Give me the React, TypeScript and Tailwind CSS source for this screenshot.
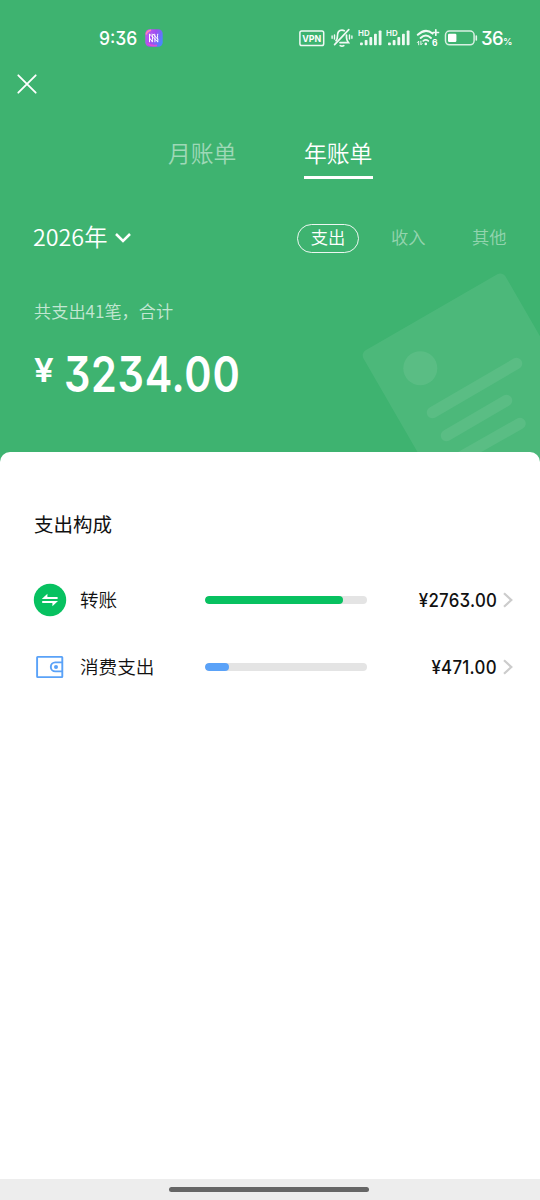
import React from "react";

type FilterItem = { label: string; active: boolean };

type ExpenseItem = {
  id: string;
  label: string;
  amount: string;
  percent: number;
  barClass: string;
  icon: React.ReactNode;
};

const filters: FilterItem[] = [
  { label: "支出", active: true },
  { label: "收入", active: false },
  { label: "其他", active: false },
];

const expenses: ExpenseItem[] = [
  {
    id: "transfer",
    label: "转账",
    amount: "¥2763.00",
    percent: 85.4,
    barClass: "bg-[#07c160]",
    icon: <TransferIcon />,
  },
  {
    id: "spending",
    label: "消费支出",
    amount: "¥471.00",
    percent: 14.6,
    barClass: "bg-[#5aa2f8]",
    icon: <WalletIcon />,
  },
];

function TransferIcon() {
  return (
    <svg width="34" height="34" viewBox="0 0 34 34">
      <circle cx="17" cy="17" r="16.2" fill="#07c160" />
      <path d="M8.8 15.9 14.4 10.8v3.1h10.2v2zM25 18.1 19.4 23.2v-3.1H9.2v-2z" fill="#fff" />
    </svg>
  );
}

function WalletIcon() {
  return (
    <svg width="34" height="34" viewBox="0 0 34 34" fill="none" stroke="#5aa2f8" strokeWidth="1.9">
      <rect x="4.1" y="6.9" width="25.2" height="20.2" rx="0.6" />
      <path d="M29.3 12.4h-7a4.5 4.5 0 0 0 0 9h7" />
      <circle cx="23" cy="16.9" r="2" fill="#5aa2f8" stroke="none" />
    </svg>
  );
}

function SignalIcon() {
  return (
    <svg width="26" height="20" viewBox="0 0 26 20" fill="#fff" opacity="0.92">
      <text x="0" y="7.5" fontSize="8" fontWeight="700" fontFamily="Inter, sans-serif" textLength="11.6" lengthAdjust="spacingAndGlyphs">
        HD
      </text>
      <rect x="2" y="14.4" width="2.8" height="2.8" rx="0.8" />
      <rect x="6.7" y="12" width="2.8" height="5.2" rx="0.8" />
      <rect x="11.4" y="9" width="2.8" height="8.2" rx="0.8" />
      <rect x="16" y="5.8" width="2.8" height="11.4" rx="0.8" />
      <rect x="20.7" y="2.4" width="2.8" height="14.8" rx="0.8" />
    </svg>
  );
}

function StatusBar() {
  return (
    <div className="flex h-[76px] items-center pr-[29px] pl-[99px] text-white">
      <span className="mt-[1px] w-[46px] origin-left scale-x-[0.97] text-[18px] leading-none font-medium">9:36</span>

      {/* App badge */}
      <svg width="18" height="18" viewBox="0 0 18 18">
        <defs>
          <linearGradient id="badge" x1="0" y1="0.2" x2="1" y2="0.6">
            <stop offset="0" stopColor="#c45bf0" />
            <stop offset="0.5" stopColor="#a04df0" />
            <stop offset="1" stopColor="#4a86ff" />
          </linearGradient>
        </defs>
        <rect x="0.3" y="0.3" width="17.4" height="17.4" rx="4.5" fill="url(#badge)" />
        <path d="M2.5 14.5Q5 17.2 12 16.4" stroke="#e04bd8" strokeWidth="1.8" fill="none" />
        <path d="M1.2 5.5Q2 1.8 6 1.2" stroke="#ff86b0" strokeWidth="1.5" fill="none" />
        <path
          d="M4.5 4.8v8.4M7 4.7c1.2 3 .2 5 .3 8.5M9.6 4.8c.8 2.5.2 5 .3 8.4M12.8 4.8c-.8 2.5.2 5 0 8.4M4.5 5l4 4 4.5 4M4.5 9 7.5 13M8 5l5 5.5"
          stroke="#fff"
          strokeWidth="1"
          fill="none"
        />
      </svg>

      <div className="ml-auto flex items-center">
        <svg width="26" height="17" viewBox="0 0 26 17" fill="none">
          <rect x="0.9" y="0.9" width="23.8" height="14.6" rx="1.8" stroke="#fff" strokeOpacity="0.92" strokeWidth="1.5" />
          <text x="3.3" y="11.7" fontSize="9.5" fontWeight="700" fill="#fff" fontFamily="Inter, sans-serif" textLength="19" lengthAdjust="spacingAndGlyphs">
            VPN
          </text>
        </svg>

        {/* Muted bell */}
        <svg className="ml-[6px]" width="22" height="20" viewBox="0 0 22 20" fill="none" stroke="#fff" strokeOpacity="0.92" strokeWidth="1.7" strokeLinecap="round">
          <path d="M3.6 16.6 17.8 1.6" />
          <path d="M5 12.6q1.4-1.5 1.4-4.2C6.4 4.8 8 2.2 11 2.2q1.3 0 2.3.5M15.5 7v2.8q0 2.4 1.9 4.8H9" />
          <path d="M9.2 17.6q1.8 1.2 3.6 0" />
          <path d="M3.5 7v4M1.1 8v2.2M18.5 7v4M20.9 8v2.2" strokeWidth="1.4" />
        </svg>

        <div className="ml-[5px] flex gap-[2px]">
          <SignalIcon />
          <SignalIcon />
        </div>

        <svg className="ml-[4px]" width="26" height="20" viewBox="0 0 26 20" fill="none" stroke="#fff" strokeOpacity="0.92" strokeLinecap="round">
          <path d="M1.8 6.8Q9.5-.4 16.6 5.6" strokeWidth="2" />
          <path d="M4.6 9.9q5.2-4.8 10.4 0" strokeWidth="2" />
          <path d="M7.3 12.9q2.5-2 5 0" strokeWidth="1.8" />
          <circle cx="9.8" cy="15.9" r="1.3" fill="#fff" stroke="none" />
          <path d="M19.8 1.8v5.4M17.1 4.5h5.4" strokeWidth="1.7" />
          <path d="M2.7 16.8v-3.6l-1.3 1.3M4.9 13.2v3.6l1.3-1.3" strokeWidth="1" />
          <text x="16" y="18.2" fontSize="8.5" fontWeight="700" fill="#fff" stroke="none" fontFamily="Inter, sans-serif">
            6
          </text>
        </svg>

        <svg className="ml-[2px]" width="34" height="16" viewBox="0 0 34 16">
          <rect x="1.5" y="1" width="28.6" height="13.8" rx="4" fill="none" stroke="#fff" strokeOpacity="0.8" strokeWidth="1.5" />
          <rect x="4" y="3.8" width="8.4" height="8.2" rx="1.2" fill="#fff" />
          <path d="M32.3 6v4" stroke="#fff" strokeOpacity="0.85" strokeWidth="1.6" strokeLinecap="round" />
        </svg>

        <span className="mt-[1px] ml-[3px] flex w-[30px] items-baseline leading-none font-medium">
          <span className="text-[18.5px] tracking-[-0.7px]">36</span>
          <span className="text-[9.5px]">%</span>
        </span>
      </div>
    </div>
  );
}

function BillWatermark() {
  return (
    <svg className="absolute right-0 bottom-0" width="180" height="197" viewBox="360 265 180 197" fill="#fff">
      <g transform="translate(360.5 353.3) rotate(-30)">
        <rect width="164" height="220" rx="6" fillOpacity="0.075" />
      </g>
      <circle cx="420.3" cy="368.3" r="17" fillOpacity="0.08" />
      <g stroke="#fff" strokeOpacity="0.08" strokeWidth="11.5" strokeLinecap="round">
        <path d="M432.500 412.500 516.500 363.500" />
        <path d="M446.500 435.500 506.500 400.500" />
        <path d="M460 457.500 520 423.500" />
      </g>
    </svg>
  );
}

function ExpenseRow({ item }: { item: ExpenseItem }) {
  return (
    <div className="flex h-[67.5px] items-center pr-[26px] pl-[33px]">
      {item.icon}
      <span className="ml-[13px] w-[125px] text-[18.6px] leading-[20px] font-[350]">{item.label}</span>
      <div className="h-[8px] w-[162px] overflow-hidden rounded-full bg-[#e4e4e4]">
        <div className={`h-full rounded-full ${item.barClass}`} style={{ width: `${item.percent}%` }} />
      </div>
      <span className="ml-auto origin-right scale-x-[0.91] text-[18.5px] leading-none font-medium tracking-[0.3px]">{item.amount}</span>
      <svg className="ml-[4px]" width="13" height="18" viewBox="0 0 13 18" fill="none" stroke="#ccc" strokeWidth="2.2">
        <path d="m3 2.3 7.3 6.7-7.3 6.7" />
      </svg>
    </div>
  );
}

export default function App() {
  return (
    <main className="flex h-[1200px] w-[540px] flex-col overflow-hidden bg-[#3eb370] font-['Inter','Noto_Sans_CJK_SC',sans-serif] text-[#111] [font-feature-settings:'cv09']">
      <header className="relative h-[462px] shrink-0 text-white">
        <BillWatermark />
        <StatusBar />

        <button className="block pl-[17px]" aria-label="关闭">
          <svg width="20" height="20" viewBox="0 0 20 20" stroke="#fff" strokeWidth="1.8" strokeLinecap="round" overflow="visible">
            <path d="M1.3-.7 18.7 16.7M18.7-.7 1.3 16.7" />
          </svg>
        </button>

        {/* Month / year tabs */}
        <nav className="mt-[42px] flex h-[41px] gap-[67px] pl-[168px] text-[22.8px] leading-[31px] font-[350]">
          <span className="w-[69px] text-white/50">月账单</span>
          <span className="w-[69px] border-b-[3px] border-white">年账单</span>
        </nav>

        <div className="mt-[43px] flex h-[32px] items-center pr-[33px] pl-[33px]">
          <button className="flex items-center gap-[8px] font-['Noto_Sans_CJK_SC',sans-serif] text-[23.3px] leading-none font-[350]">
            <span className="-mt-[3px]">2026年</span>
            <svg width="16" height="12" viewBox="0 0 16 12" fill="none" stroke="#fff" strokeWidth="2.5">
              <path d="m1 2 7 7 7-7" />
            </svg>
          </button>
          <div className="ml-auto flex items-center text-[17.3px] leading-none">
            {filters.map((filter) => (
              <span
                key={filter.label}
                className={
                  filter.active
                    ? "flex h-[29px] w-[62px] items-center justify-center rounded-full border border-white/90 font-[350]"
                    : "ml-[32px] w-[35px] font-[350] text-white/45 last:ml-[46px]"
                }
              >
                {filter.label}
              </span>
            ))}
          </div>
        </div>

        <p className="mt-[45px] pl-[34px] font-['Noto_Sans_CJK_SC',sans-serif] text-[17.2px] leading-[24px] font-[350] text-white/70">
          共支出41笔，合计
        </p>
        <p className="mt-[27px] flex items-start pl-[34px] leading-none font-semibold">
          <span className="mt-[4px] w-[29.5px] origin-left scale-x-[1.06] text-[33px]">¥</span>
          <span className="origin-left scale-x-[0.846] text-[49px] tracking-[0.8px]">3234.00</span>
        </p>
      </header>

      <section className="relative -mt-[10px] flex-1 rounded-t-[10px] bg-white">
        <h2 className="pt-[61px] pl-[34px] text-[19.5px] leading-[25px] font-normal">支出构成</h2>
        <div className="mt-[28px]">
          {expenses.map((item) => (
            <ExpenseRow key={item.id} item={item} />
          ))}
        </div>
      </section>

      <footer className="flex h-[21px] shrink-0 justify-center bg-[#ededed] pt-[8px] pr-[3px]">
        <div className="h-[5px] w-[200px] rounded-full bg-[#666]" />
      </footer>
    </main>
  );
}
